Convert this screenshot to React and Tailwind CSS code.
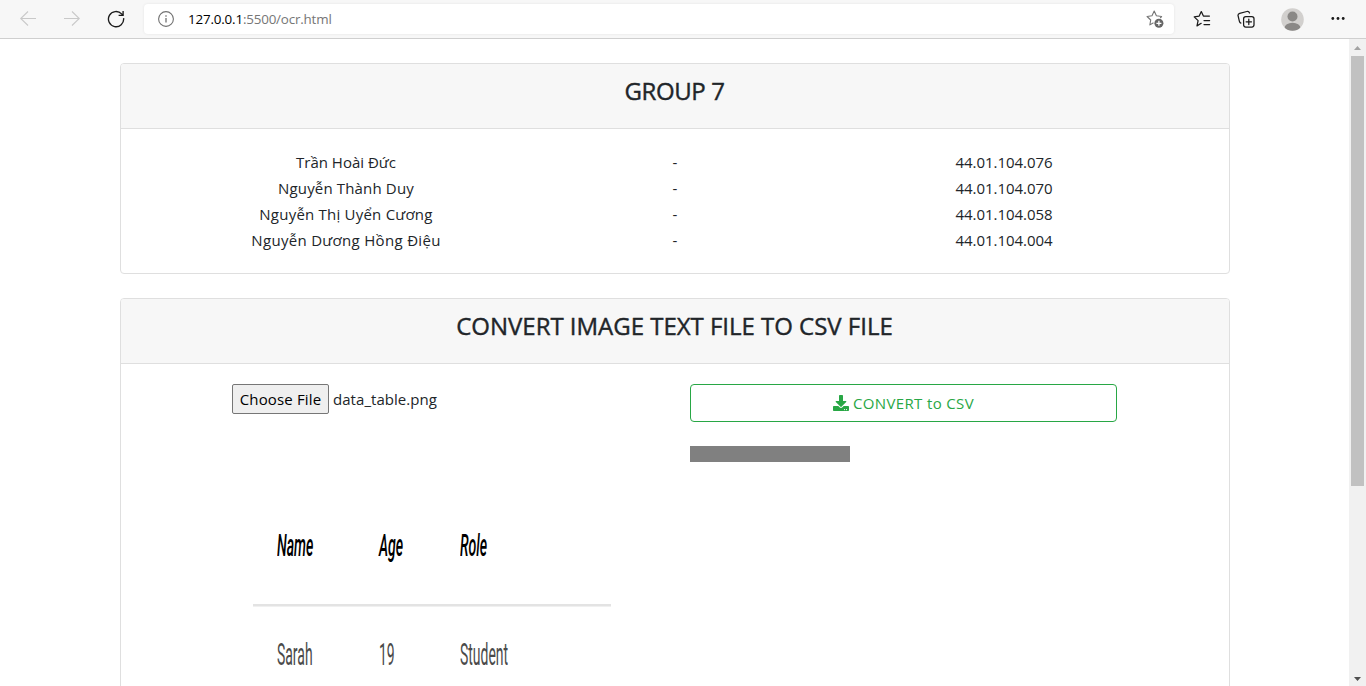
import React from "react";

const members = [
  ["Trần Hoài Đức", "44.01.104.076", "tracking-[0px]"],
  ["Nguyễn Thành Duy", "44.01.104.070", "tracking-[0.16px]"],
  ["Nguyễn Thị Uyển Cương", "44.01.104.058", "tracking-[0.22px]"],
  ["Nguyễn Dương Hồng Điệu", "44.01.104.004", "tracking-[0.31px]"],
];

function Toolbar() {
  return (
    <header className="flex h-[39px] shrink-0 items-center border-b border-[#cfcfcf] bg-[#f7f7f7]">
      <svg className="ml-5 h-4 w-4" viewBox="0 0 16 16" fill="none" stroke="#c9c9c9" strokeWidth="1.1">
        <path d="M16 7.500H.7M8 .5.7 7.500 8 14.500" />
      </svg>
      <svg className="ml-7 h-4 w-4" viewBox="0 0 16 16" fill="none" stroke="#c9c9c9" strokeWidth="1.1">
        <path d="M0 7.500h15.300M8 .5l7.300 7L8 14.500" />
      </svg>
      <svg className="ml-[27px] h-[18px] w-[18px]" viewBox="0 0 18 18" fill="none" stroke="#1b1b1b" strokeWidth="1.35">
        <path d="M16.600 8.200A7.600 7.600 0 1 1 14.600 3.900L16 5.300M16.100 .9V5.400H11.600" />
      </svg>
      <div className="ml-[19px] flex h-[30px] w-[1030px] items-center rounded-[4px] bg-white shadow-[0_0_3px_rgba(0,0,0,0.08)]">
        <svg className="ml-[14px] h-4 w-4" viewBox="0 0 16 16" fill="none" stroke="#717171">
          <circle cx="8" cy="8" r="7.4" strokeWidth="1.1" />
          <path d="M8 7v4.600M8 4.300v1.400" strokeWidth="1.3" />
        </svg>
        <span className="ml-[14px] text-[13.4px] leading-5 tracking-[-0.18px] text-[#767676]">
          <span className="text-black">127.0.0.1</span>:5500/ocr.html
        </span>
        <svg className="mr-[10px] ml-auto h-[18px] w-[18px]" viewBox="0 0 18 18" fill="none">
          <path d="M7.500 12.700 3.900 14.900 4.700 10 1.100 6.500 6 5.700 8.200 1.100 10.400 5.700 15.600 6.500 14.200 8" stroke="#757575" strokeWidth="1.1" strokeLinejoin="round" />
          <circle cx="12.900" cy="13.300" r="4.500" fill="#666" />
          <path d="M12.900 10.800v5M10.400 13.300h5" stroke="#fff" strokeWidth="1.3" />
        </svg>
      </div>
      <svg className="ml-[19px] h-[18px] w-[18px]" viewBox="0 0 18 18" fill="none" stroke="#1b1b1b" strokeWidth="1.25" strokeLinejoin="round" strokeLinecap="round">
        <path d="M8.200 13.300 4 15.900 5.100 10.600 1.200 6.900 6.200 6.100 8.300 1.600 10.400 6.100H16.400M11 10.500H16.600M11 14.500H16.600" />
      </svg>
      <svg className="ml-[26px] h-[18px] w-[18px]" viewBox="0 0 18 18" fill="none" stroke="#1b1b1b" strokeWidth="1.25" strokeLinecap="round">
        <path d="M3.900 13.100C2.900 12.800 2.600 12.200 2.400 11.400L1.100 5.900C.8 4.600 1.400 3.700 2.700 3.300L9.800 1.500C11.200 1.200 12.100 1.700 12.500 3" />
        <rect x="6.600" y="6.600" width="10.400" height="10.400" rx="2.200" />
        <path d="M11.800 9.100v5.400M9.100 11.800H14.500" />
      </svg>
      <svg className="ml-[26px] h-[23px] w-[23px]" viewBox="0 0 23 23">
        <clipPath id="avatar"><circle cx="11.500" cy="11.500" r="11.300" /></clipPath>
        <g clipPath="url(#avatar)">
          <path fill="#d2d0ce" d="M0 0h23v23H0z" />
          <circle cx="11.500" cy="8.500" r="5" fill="#8a8886" />
          <ellipse cx="11.500" cy="20" rx="8" ry="5.300" fill="#8a8886" />
        </g>
      </svg>
      <svg className="ml-[26px] h-4 w-4" viewBox="0 0 16 16" fill="#1b1b1b">
        <circle cx="2.800" cy="7.500" r="1.400" /><circle cx="8" cy="7.500" r="1.400" /><circle cx="13.200" cy="7.500" r="1.400" />
      </svg>
    </header>
  );
}

function Card({ title, className, titleClass, children }) {
  return (
    <section className={"w-[1110px] shrink-0 rounded-[4px] border border-[#dfdfdf] bg-white " + className}>
      <div className="h-[65px] rounded-t-[3px] border-b border-[#dfdfdf] bg-[#f7f7f7] pt-[12px] pr-[1px] text-center">
        <h4 className={"text-[24px] leading-[29px] font-medium [-webkit-text-stroke:0.4px_#212529] " + titleClass}>{title}</h4>
      </div>
      {children}
    </section>
  );
}

function Cell({ children, className }) {
  return (
    <div className="w-0 overflow-visible whitespace-nowrap">
      <span className={"inline-block origin-left " + className}>{children}</span>
    </div>
  );
}

function DataTable() {
  return (
    <div className="ml-[21px] w-[358px] font-['Roboto',sans-serif]">
      <div className="grid h-[95px] grid-cols-[102px_81px_1fr] pt-[19px] pl-[24px] text-[31px] leading-[36px] text-black">
        <Cell className="scale-x-[0.455] font-medium italic">Name</Cell>
        <Cell className="scale-x-[0.455] font-medium italic">Age</Cell>
        <Cell className="scale-x-[0.455] font-medium italic">Role</Cell>
      </div>
      <div className="h-[3px] border-b border-[#f0f0f0] bg-[#e3e3e3]" />
      <div className="grid grid-cols-[102px_81px_1fr] pt-[30px] pl-[24px] text-[31px] leading-[36px] text-[#4a4a4a]">
        <Cell className="scale-x-[0.45]">Sarah</Cell>
        <Cell className="scale-x-[0.45]">19</Cell>
        <Cell className="scale-x-[0.45]">Student</Cell>
      </div>
    </div>
  );
}

function Scrollbar() {
  return (
    <div className="flex w-[17px] shrink-0 flex-col items-center bg-[#f1f1f1]">
      <svg className="h-[17px] w-[17px] shrink-0" viewBox="0 0 17 17"><path d="M5 11h7L8.500 7z" fill="#a3a3a3" /></svg>
      <div className="h-[430px] w-[13px] shrink-0 bg-[#c1c1c1]" />
      <svg className="mt-auto h-[17px] w-[17px] shrink-0" viewBox="0 0 17 17"><path d="M5 8h7L8.500 12z" fill="#505050" /></svg>
    </div>
  );
}

export default function App() {
  return (
    <div className="flex h-[686px] w-[1366px] flex-col overflow-hidden bg-white font-['Open_Sans','Noto_Sans',sans-serif] text-[#212529]">
      <Toolbar />
      <div className="flex min-h-0 flex-1">
        <main className="flex min-w-0 flex-1 flex-col gap-6 overflow-hidden pt-6 pl-[120px]">
          <Card title="GROUP 7" className="h-[211px]" titleClass="tracking-[-0.4px]">
            <div className="mx-auto grid w-[987px] grid-cols-3 pt-[20px] text-center text-[15px] leading-[26px]">
              {members.map(([name, id, tracking]) => (
                <React.Fragment key={id}>
                  <span className={tracking}>{name}</span>
                  <span>-</span>
                  <span className="tracking-[-0.04px]">{id}</span>
                </React.Fragment>
              ))}
            </div>
          </Card>
          <Card title="CONVERT IMAGE TEXT FILE TO CSV FILE" className="h-[500px]" titleClass="tracking-[-0.02px]">
            <div className="flex pt-5 pl-[111px]">
              <div className="w-[458px]">
                <div className="flex items-center text-[15px] leading-6">
                  <button className="h-[30px] w-[97px] rounded-[2px] border border-[#767676] bg-[#efefef] tracking-[0.15px] text-black">Choose File</button>
                  <span className="ml-1 tracking-[0.05px]">data_table.png</span>
                </div>
                <div className="mt-[95px]"><DataTable /></div>
              </div>
              <div>
                <button className="flex h-[38px] w-[427px] items-center justify-center gap-1 rounded-[4px] border border-[#28a745] text-[15px] text-[#28a745]">
                  <svg className="h-4 w-4" viewBox="0 0 512 512" fill="currentColor">
                    <path d="M216 0h80c13.300 0 24 10.700 24 24v168h87.700c17.800 0 26.700 21.500 14.100 34.100L269.700 378.300c-7.500 7.500-19.800 7.500-27.300 0L90.100 226.100c-12.600-12.600-3.700-34.100 14.100-34.100H192V24c0-13.300 10.700-24 24-24zm296 376v112c0 13.300-10.700 24-24 24H24c-13.300 0-24-10.700-24-24V376c0-13.300 10.700-24 24-24h146.700l49 49c20.100 20.100 52.500 20.100 72.600 0l49-49H488c13.300 0 24 10.700 24 24zm-124 88c0-11-9-20-20-20s-20 9-20 20 9 20 20 20 20-9 20-20zm64 0c0-11-9-20-20-20s-20 9-20 20 9 20 20 20 20-9 20-20z" />
                  </svg>
                  <span className="tracking-[0.35px]">CONVERT to CSV</span>
                </button>
                <div className="mt-6 h-4 w-40 bg-[#808080]" />
              </div>
            </div>
          </Card>
        </main>
        <Scrollbar />
      </div>
    </div>
  );
}
